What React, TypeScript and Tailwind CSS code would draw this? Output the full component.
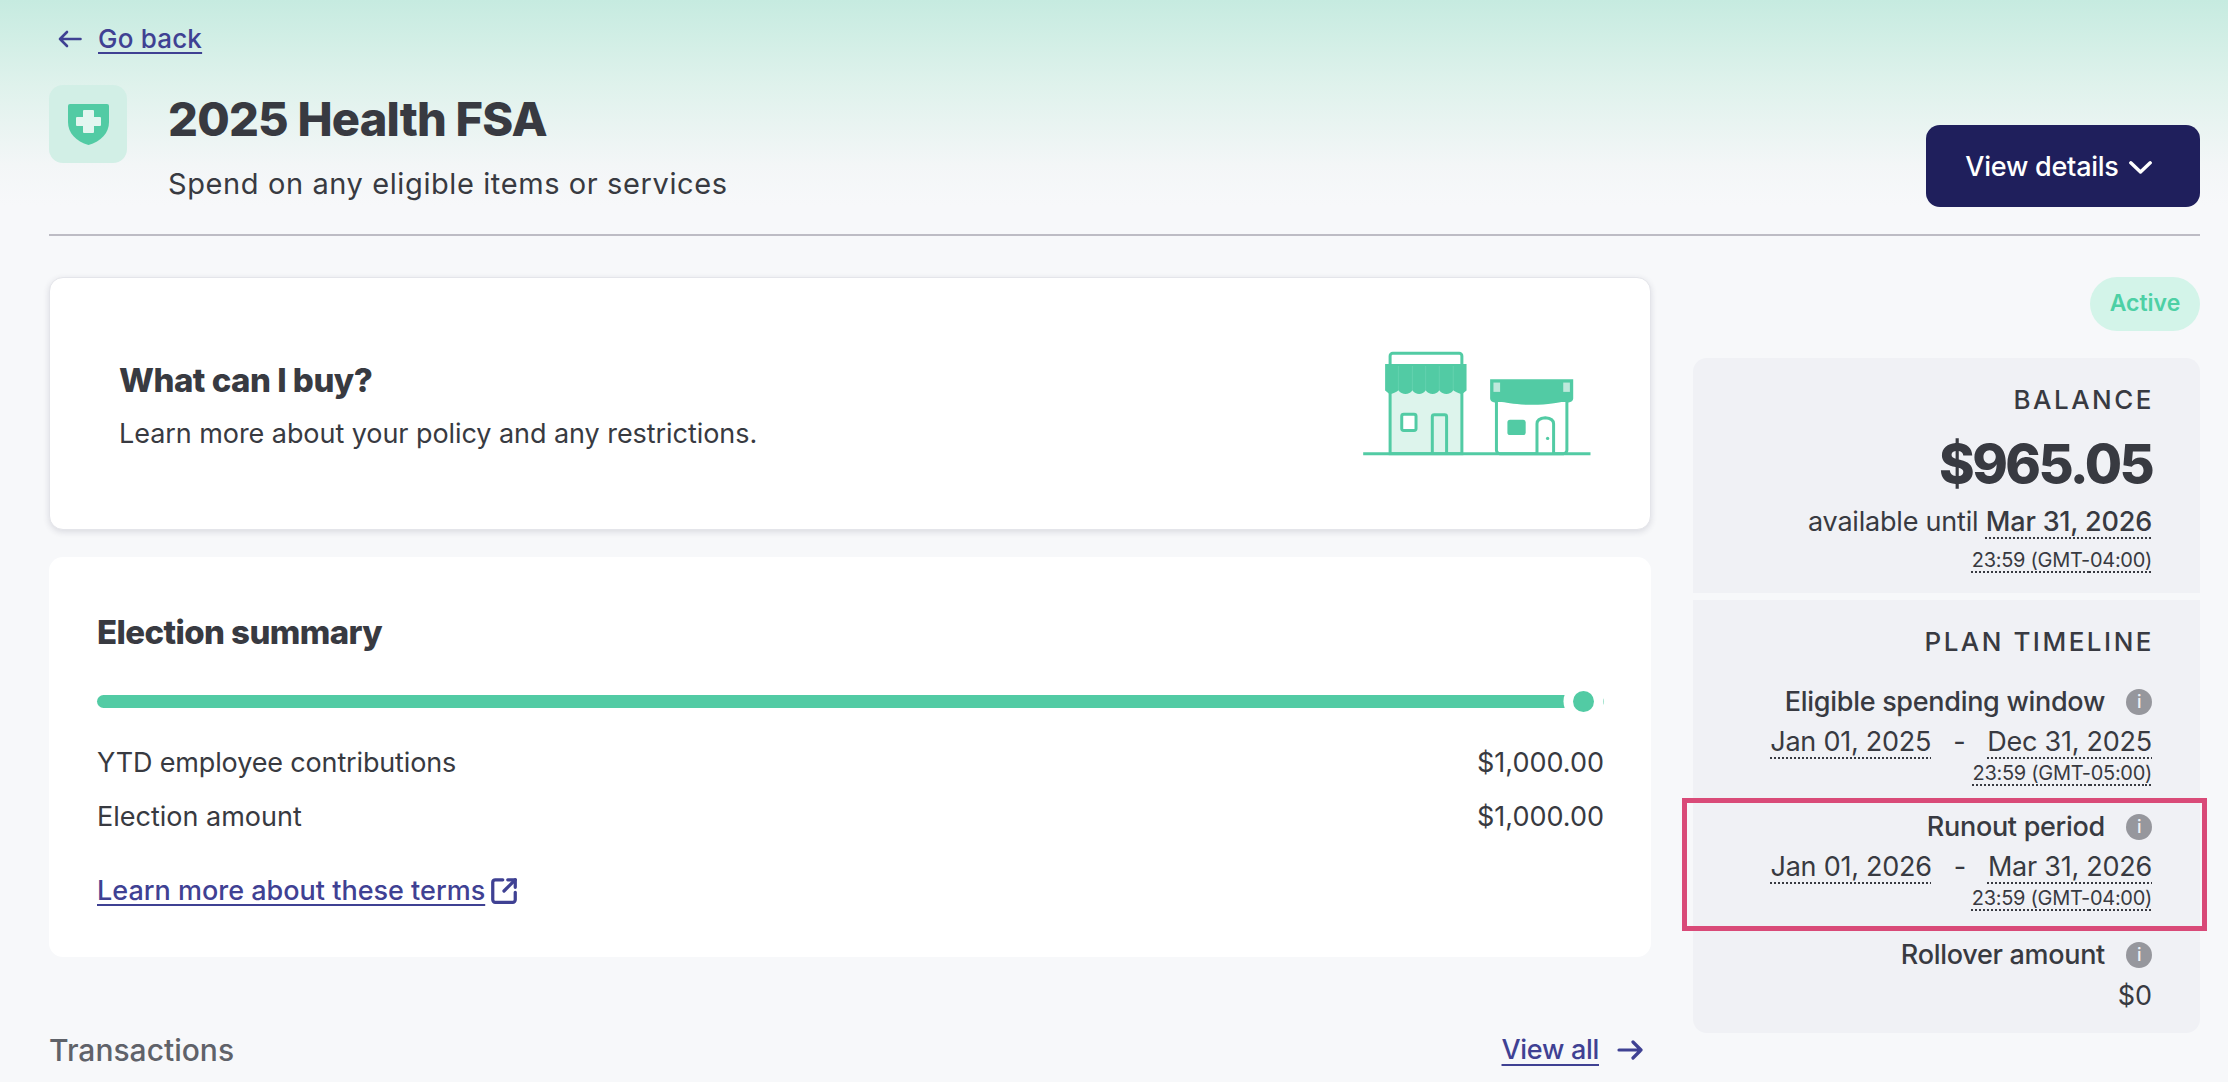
import { SquareArrowOutUpRight } from 'lucide-react';

function ArrowLeft() {
  return (
    <svg width="24" height="18" viewBox="0 0 24 18" fill="none" stroke="#3f4193" strokeWidth="2.6" strokeLinecap="round" strokeLinejoin="round">
      <path d="M22.500 9H2M9 2 2 9l7 7" />
    </svg>
  );
}

function ArrowRight() {
  return (
    <svg width="26" height="20" viewBox="0 0 26 20" fill="none" stroke="#3f4193" strokeWidth="3.2" strokeLinecap="round" strokeLinejoin="round">
      <path d="M2 10h22M16 2l8 8-8 8" />
    </svg>
  );
}

function Chevron() {
  return (
    <svg width="23" height="13" viewBox="0 0 23 13" fill="none" stroke="#fff" strokeWidth="3.4" strokeLinecap="round" strokeLinejoin="round">
      <path d="M1.800 1.800 11.500 11 21.200 1.800" />
    </svg>
  );
}

function ShieldIcon() {
  return (
    <svg width="41" height="41" viewBox="0 0 41 41">
      <path d="M0 2a2 2 0 0 1 2-2h37a2 2 0 0 1 2 2v16c0 11-8 19.500-20.500 23C8 37.500 0 29 0 18z" fill="#52cba4" />
      <path d="M16 6h9a1 1 0 0 1 1 1v6h6a1 1 0 0 1 1 1v7a1 1 0 0 1-1 1h-6v6a1 1 0 0 1-1 1h-9a1 1 0 0 1-1-1v-6H9a1 1 0 0 1-1-1v-7a1 1 0 0 1 1-1h6V7a1 1 0 0 1 1-1z" fill="#e4f6f0" />
    </svg>
  );
}

function StoreArt() {
  const g = '#52cba4';
  return (
    <svg width="233" height="108" viewBox="180 90 700 325" fill="none">
      {/* left shop */}
      <rect x="267" y="100" width="216" height="40" rx="8" fill="#fff" stroke={g} strokeWidth="9" />
      <rect x="267" y="200" width="216" height="202" fill="#ddf4ec" stroke={g} strokeWidth="9" />
      <path d="M252 132H497V212L483 223C470 218 462 216 457 211C448 226 425 226 415 211C406 226 384 226 374 211C365 226 344 226 334 211C325 226 302 226 292 211C287 217 278 220 266 223L252 212Z" fill={g} />
      <path d="M292 138V210M334 138V210M374 138V210M415 138V210M457 138V210" stroke="#6dd5b3" strokeWidth="2" />
      <rect x="302" y="283" width="43" height="49" rx="6" fill="#fff" stroke={g} strokeWidth="9" />
      <path d="M394 400V291a6 6 0 0 1 6-6h31a6 6 0 0 1 6 6V400" stroke={g} strokeWidth="9" />
      {/* right shop */}
      <rect x="587" y="222" width="212" height="180" rx="10" fill="#fff" stroke={g} strokeWidth="9" />
      <path d="M568 178H818V236C818 243 812 247 804 248C780 242 760 255 693 255C630 255 606 242 582 248C574 247 568 243 568 236Z" fill={g} />
      <rect x="578" y="188" width="20" height="28" fill="#bfe9dc" />
      <rect x="788" y="188" width="20" height="28" fill="#bfe9dc" />
      <rect x="620" y="300" width="55" height="46" rx="8" fill={g} />
      <path d="M709 400V312Q709 296 734 294Q759 296 759 312V400" fill="#fff" stroke={g} strokeWidth="9" />
      <circle cx="741" cy="356" r="5" fill={g} />
      <path d="M186 402H870" stroke={g} strokeWidth="9" />
    </svg>
  );
}

function InfoDot() {
  return (
    <span className="flex h-[26px] w-[26px] items-center justify-center rounded-full bg-[#96979d] text-[18px] font-medium leading-none text-[#f0f1f5]">
      i
    </span>
  );
}

function Dotted({ children, strong }: { children: React.ReactNode; strong?: boolean }) {
  return (
    <span className={`underline decoration-dotted decoration-2 underline-offset-[6px] ${strong ? 'font-medium' : ''}`}>
      {children}
    </span>
  );
}

function TimeLine({ zone }: { zone: string }) {
  return (
    <div className="text-[20px] leading-[24px] tracking-[-0.3px]">
      <span className="underline decoration-dotted decoration-2 underline-offset-[4px]">23:59 (GMT-{zone})</span>
    </div>
  );
}

function DateRange({ from, to, zone }: { from: string; to: string; zone: string }) {
  return (
    <>
      <div className="mt-[6px] flex justify-end gap-[22px] text-[27px] leading-[34px] tracking-[-0.25px]">
        <Dotted>{from}</Dotted>
        <span>-</span>
        <Dotted>{to}</Dotted>
      </div>
      <div className="mt-[2px]">
        <TimeLine zone={zone} />
      </div>
    </>
  );
}

function TimelineLabel({ children }: { children: React.ReactNode }) {
  return (
    <div className="flex items-center justify-end gap-[21px] text-[27px] font-medium leading-[34px] tracking-[-0.3px]">
      <span>{children}</span>
      <InfoDot />
    </div>
  );
}

export default function App() {
  return (
    <div
      className="h-[1082px] w-[2228px] overflow-hidden bg-[linear-gradient(180deg,#c6ebe0_0px,#dff2ec_85px,#f3f6f7_165px,#f7f8fa_205px)] pl-[49px] pr-[28px] text-[#383a41]"
      style={{ fontFamily: 'Inter, "Liberation Sans", sans-serif' }}
    >
      {/* Header */}
      <div className="flex h-[85px] items-start pl-[9px] pt-[21px]">
        <a href="#back" className="flex items-center gap-[16px] text-[26px] font-medium leading-[36px] tracking-[0.2px] text-[#3f4193]">
          <ArrowLeft />
          <span className="underline underline-offset-[4px]">Go back</span>
        </a>
      </div>

      <div className="flex items-end justify-between border-b-2 border-[#bdbcc4] pb-[27px]">
        <div className="flex h-[122px] items-start gap-[41px]">
          <div className="flex h-[78px] w-[78px] items-center justify-center rounded-[14px] bg-[#d2efe6]">
            <ShieldIcon />
          </div>
          <div>
            <h1 className="mt-[5px] text-[47px] font-extrabold leading-[58px] tracking-[-0.8px]">2025 Health FSA</h1>
            <p className="mt-[17px] text-[29px] leading-[38px] tracking-[0.6px]">Spend on any eligible items or services</p>
          </div>
        </div>
        <button className="flex h-[82px] w-[274px] items-center justify-center gap-[10px] rounded-[14px] bg-[#1f1f5c] pr-[9px] pt-[2px] text-[27px] font-medium tracking-[-0.25px] text-white">
          View details
          <Chevron />
        </button>
      </div>

      {/* Body */}
      <div className="mt-[41px] flex gap-[42px]">
        <div className="w-[1602px]">
          <div className="flex h-[253px] items-center justify-between rounded-[14px] border border-[#e4e5ea] bg-white pl-[69px] pr-[56px] shadow-[0_2px_6px_rgba(40,40,70,0.14)]">
            <div className="pt-[4px]">
              <h2 className="text-[33px] font-extrabold leading-[42px] tracking-[-0.5px]">What can I buy?</h2>
              <p className="mt-[15px] text-[27px] leading-[36px] tracking-[-0.06px]">Learn more about your policy and any restrictions.</p>
            </div>
            <StoreArt />
          </div>

          <div className="mt-[27px] h-[400px] rounded-[14px] bg-white pl-[48px] pr-[47px] pt-[53px]">
            <h2 className="text-[33px] font-extrabold leading-[44px] tracking-[-0.6px]">Election summary</h2>
            <div className="relative mt-[41px] h-[13px] rounded-full bg-[#52cba4]">
              <span className="absolute right-[10px] top-[-4px] h-[21px] w-[21px] rounded-full bg-[#52cba4] shadow-[0_0_0_9.5px_#fff]" />
            </div>
            <div className="mt-[37px] flex justify-between text-[27px] leading-[36px]">
              <span className="tracking-[-0.15px]">YTD employee contributions</span>
              <span>$1,000.00</span>
            </div>
            <div className="mt-[18px] flex justify-between text-[27px] leading-[36px]">
              <span>Election amount</span>
              <span>$1,000.00</span>
            </div>
            <a href="#terms" className="mt-[38px] flex items-center gap-[4px] text-[27px] font-medium leading-[36px] text-[#3f4193]">
              <span className="underline underline-offset-[4px]">Learn more about these terms</span>
              <SquareArrowOutUpRight size={30} strokeWidth={2.6} />
            </a>
          </div>

          <div className="mt-[74px] flex items-center justify-between pr-[8px]">
            <h3 className="text-[30px] font-medium leading-[38px] text-[#5f6269]">Transactions</h3>
            <a href="#all" className="flex items-center gap-[18px] text-[27px] font-medium leading-[36px] tracking-[-0.3px] text-[#3f4193]">
              <span className="underline underline-offset-[5px]">View all</span>
              <ArrowRight />
            </a>
          </div>
        </div>

        {/* Side column */}
        <aside className="relative w-[507px]">
          <div className="flex justify-end">
            <span className="flex h-[54px] w-[110px] items-center justify-center rounded-full bg-[#d3f4e9] pb-[2px] text-[23px] font-semibold text-[#4dd0a5]">
              Active
            </span>
          </div>
          <div className="mt-[27px] h-[235px] rounded-t-[14px] bg-[#f0f1f5] pr-[48px] pt-[26px] text-right">
            <div className="-mr-[2px] text-[26px] font-medium leading-[32px] tracking-[2.5px]">BALANCE</div>
            <div className="mt-[17px] text-[54px] font-extrabold leading-[62px] tracking-[-2.6px]">$965.05</div>
            <div className="mt-[9px] text-[27px] leading-[36px] tracking-[-0.2px]">
              available until <Dotted strong>Mar 31, 2026</Dotted>
            </div>
            <div className="mt-[8px]">
              <TimeLine zone="04:00" />
            </div>
          </div>
          <div className="mt-[7px] h-[433px] rounded-b-[14px] bg-[#f0f1f5] pr-[48px] pt-[26px] text-right">
            <div className="-mr-[2px] text-[26px] font-medium leading-[32px] tracking-[2.5px]">PLAN TIMELINE</div>
            <div className="mt-[27px]">
              <TimelineLabel>Eligible spending window</TimelineLabel>
              <DateRange from="Jan 01, 2025" to="Dec 31, 2025" zone="05:00" />
            </div>
            <div className="mt-[25px]">
              <TimelineLabel>Runout period</TimelineLabel>
              <DateRange from="Jan 01, 2026" to="Mar 31, 2026" zone="04:00" />
            </div>
            <div className="mt-[28px]">
              <TimelineLabel>Rollover amount</TimelineLabel>
              <div className="mt-[7px] text-[27px] leading-[34px]">$0</div>
            </div>
          </div>

          {/* annotation box */}
          <div className="absolute left-[-11px] top-[521px] h-[133px] w-[525px] border-[5px] border-[#d94a78]" />
        </aside>
      </div>
    </div>
  );
}
